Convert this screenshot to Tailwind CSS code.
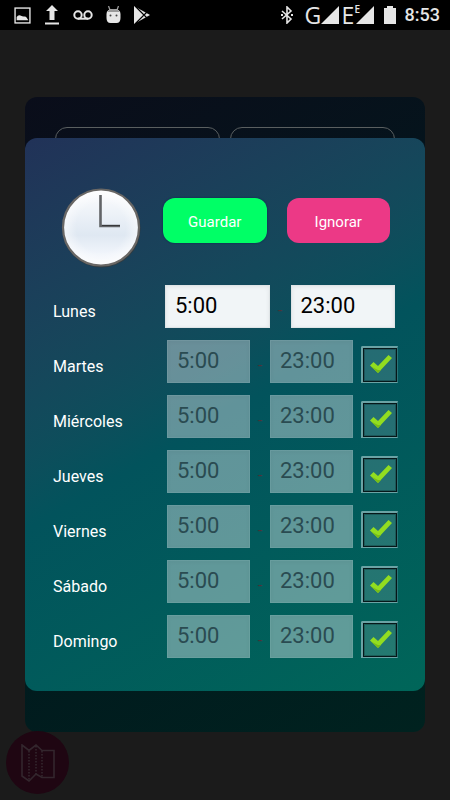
<!DOCTYPE html>
<html lang="es">
<head>
<meta charset="utf-8">
<meta name="viewport" content="width=device-width, initial-scale=1">
<title>Horario</title>
<script src="https://cdn.jsdelivr.net/npm/@tailwindcss/browser@4"></script>
</head>
<body class="flex min-h-screen flex-col bg-[#1b1b1b] font-['Roboto',sans-serif] text-white">
<header class="flex h-[30px] shrink-0 items-center justify-between bg-black pr-[10px] pl-[14px] text-[#e6e6e6]">
  <div class="flex items-center gap-[13px]">
    <svg class="size-[17px]" viewBox="0 0 16 16"><rect x="1" y="1" width="14" height="14" fill="none" stroke="currentColor" stroke-width="1.3"/><path d="M2.500 12.500V9.500q1.500-2.500 3.500-1.500t3 1q2-.500 3 1t1.500 2.500z" fill="currentColor"/></svg>
    <svg class="h-5 w-[16px]" viewBox="0 0 16 20"><path d="M8 0l6 6h-3.500v9h-5V6H2zM1 17.500h14v2H1z" fill="currentColor"/></svg>
    <svg class="h-[10px] w-5" viewBox="0 0 20 10"><path d="M5 8.700h10" stroke="currentColor" stroke-width="2"/><circle cx="5" cy="5" r="3.700" fill="none" stroke="currentColor" stroke-width="2"/><circle cx="15" cy="5" r="3.700" fill="none" stroke="currentColor" stroke-width="2"/></svg>
    <svg class="h-[18px] w-[15px]" viewBox="0 0 14 18"><path d="M2 0l1.500 4M12 0l-1.500 4" stroke="#999" stroke-width="1.300"/><path d="M0 8Q0 3 7 3t7 5v4q0 5-4 5H4q-4 0-4-5z" fill="currentColor"/><path d="M1 6Q2 3 7 3t6 3z" fill="#999"/><circle cx="4" cy="9.500" r="1" fill="#444"/><circle cx="10" cy="9.500" r="1" fill="#444"/></svg>
    <svg class="h-[18px] w-4" viewBox="0 0 16 18"><path d="M0 0L16 9 0 18z" fill="currentColor"/><path d="M1 0L13 12M1 18L13 6" stroke="#000" stroke-width="1.200"/></svg>
  </div>
  <div class="flex items-center">
    <svg class="mr-[12px] h-[18px] w-3" viewBox="0 0 12 18" fill="none" stroke="currentColor" stroke-width="1.600"><path d="M1 5l9 8-4 4V1l4 4-9 8"/><path d="M0 9h2M10 9h2" stroke-width="2"/></svg>
    <span class="w-4 font-['Open_Sans',sans-serif] text-[23px] leading-5">G</span>
    <svg class="h-[18px] w-[18px]" viewBox="0 0 18 18"><path d="M18 0v18H0z" fill="currentColor"/></svg>
    <div class="relative ml-[3px] w-[14px] font-['Open_Sans',sans-serif] text-[23px] leading-5">E<span class="absolute -top-px left-[13px] text-[10px] leading-[10px] font-semibold">E</span></div>
    <svg class="h-[18px] w-[18px]" viewBox="0 0 18 18"><path d="M18 0v18H0z" fill="currentColor"/></svg>
    <svg class="ml-[10px] h-[18px] w-3" viewBox="0 0 12 18"><path d="M0 2h3V0h6v2h3v16H0z" fill="currentColor"/></svg>
    <span class="ml-[9px] text-lg leading-5 font-medium">8:53</span>
  </div>
</header>

<main class="relative flex-1 pb-[109px]">
  <div class="absolute inset-x-[25px] top-[67px] bottom-[68px] rounded-xl bg-linear-150 from-[#0a0d1a] via-[#01171d] to-[#00221f] px-[30px] pt-[30px]">
    <div class="grid grid-cols-2 gap-[10px]">
      <div class="h-11 rounded-xl border border-[#5a5f60]"></div>
      <div class="h-11 rounded-xl border border-[#5a5f60]"></div>
    </div>
  </div>

  <form role="dialog" aria-label="Horario" class="relative mx-[25px] mt-[108px] rounded-xl bg-linear-150 from-[#213258] via-[#02535c] to-[#006659] pb-[33px] text-base">
    <div class="flex items-start pt-[50px] pr-[35px] pl-9">
      <svg class="size-20 shrink-0" viewBox="0 0 80 80" aria-hidden="true">
        <defs>
          <linearGradient id="face" x1="0" y1="0" x2="0" y2="1"><stop offset="0" stop-color="#fdfdfe"/><stop offset=".25" stop-color="#f0f4f9"/><stop offset=".6" stop-color="#dfe8f2"/><stop offset=".85" stop-color="#f1f5fb"/><stop offset="1" stop-color="#f7f9fc"/></linearGradient>
          <radialGradient id="rim" cx=".5" cy=".5" r=".5"><stop offset=".65" stop-color="#fff" stop-opacity="0"/><stop offset="1" stop-color="#fff" stop-opacity=".6"/></radialGradient>
        </defs>
        <circle cx="40.500" cy="40.500" r="39" fill="#333c40"/>
        <circle cx="40" cy="39.500" r="38" fill="url(#face)"/>
        <circle cx="40" cy="39.500" r="38" fill="url(#rim)" stroke="#696765" stroke-width="2.200"/>
        <path d="M39.500 7v31H59" fill="none" stroke="#626467" stroke-width="2.600"/>
        <path d="M41 37.500h18" stroke="#38393b" stroke-width="1"/>
      </svg>
      <div class="mt-[10px] ml-[22px] grid flex-1 grid-cols-2 gap-5 text-[15px]">
        <button type="submit" class="h-[45px] rounded-xl bg-[#00ff66] pt-[3px] shadow-[0_0_1px_1px_#102a5566]">Guardar</button>
        <button type="button" class="h-[45px] rounded-xl bg-[#ec3986] pt-[3px]">Ignorar</button>
      </div>
    </div>

    <div id="days" class="mt-[17px] flex flex-col gap-3 pl-7"></div>
  </form>

  <button type="button" aria-label="Mapa" class="absolute bottom-[6px] left-[6px] flex size-[63px] items-center justify-center rounded-full bg-[#1f0612]">
    <svg class="h-[38px] w-[34px]" viewBox="0 0 34 38" fill="none" stroke="#33262d" stroke-width="1.600"><path d="M1 1l7 5.500L15 1l6 5.500h12v27H21L15 30 8 37 1 32z"/><path d="M8 7v29M15 2v28M21 7v26" stroke-dasharray="1.500 1.500"/></svg>
  </button>
</main>

<template id="first">
  <fieldset class="flex pr-[30px]">
    <label for="d0" class="w-28 shrink-0 pt-4 leading-[22px]">Lunes</label>
    <div class="flex min-w-0 flex-1">
      <input id="d0" class="h-[43px] w-0 min-w-0 flex-1 border border-[#dfe4e6] bg-[#f1f5f7] px-[9px] pb-0.5 text-[22px] text-black shadow-[inset_0_1px_4px_#00000012]" value="5:00">
      <span class="w-[21px] pt-4 text-center text-base leading-5 text-[#4a3438]">-</span>
      <input aria-label="Lunes, hasta" class="h-[43px] w-0 min-w-0 flex-1 border border-[#dfe4e6] bg-[#f1f5f7] px-[9px] pb-0.5 text-[22px] text-black shadow-[inset_0_1px_4px_#00000012]" value="23:00">
    </div>
  </fieldset>
</template>
<template id="other">
  <fieldset class="flex pr-[27px]">
    <label class="w-[114px] shrink-0 pt-4 leading-[22px]"></label>
    <div class="flex min-w-0 flex-1">
      <input disabled data-from class="h-[43px] w-0 min-w-0 flex-1 border border-white/5 bg-[#f1f5f7]/40 px-[9px] pb-0.5 text-[22px] text-[#2a4b51] shadow-[inset_0_1px_4px_#0000000a]" value="5:00">
      <span class="w-5 pt-4 text-center text-base leading-5 text-[#4a3438]">-</span>
      <input disabled data-to class="h-[43px] w-0 min-w-0 flex-1 border border-white/5 bg-[#f1f5f7]/40 px-[9px] pb-0.5 text-[22px] text-[#2a4b51] shadow-[inset_0_1px_4px_#0000000a]" value="23:00">
      <div class="relative mt-[6px] ml-2 size-[37px] shrink-0 rounded-tl-xs border-t-2 border-r border-b border-l-2 border-t-[#6ba3a5] border-r-[#2b7377] border-b-[#6ba3a5] border-l-[#6ba3a5]">
        <input type="checkbox" checked class="peer block size-full appearance-none border border-[#061719] bg-white/14 shadow-[inset_0_0_0_1px_#06171944]">
        <svg class="pointer-events-none absolute top-1 left-[6px] hidden size-6 peer-checked:block" viewBox="0 0 24 24"><path d="M1 13.500l3.500-3.500 4.500 4L19.500 3l3.500 3L9 21z" fill="#92dd20"/><path d="M2 14.500L9 21 12 18 9 18z" fill="#78bd18"/></svg>
      </div>
    </div>
  </fieldset>
</template>
<script>
const list = document.getElementById('days');
list.append(document.getElementById('first').content.cloneNode(true));
['Martes', 'Miércoles', 'Jueves', 'Viernes', 'Sábado', 'Domingo'].forEach((day, i) => {
  const row = document.getElementById('other').content.cloneNode(true);
  const label = row.querySelector('label');
  label.textContent = day;
  label.htmlFor = 'd' + (i + 1);
  row.querySelector('[data-from]').id = 'd' + (i + 1);
  row.querySelector('[data-to]').ariaLabel = day + ', hasta';
  row.querySelector('[type=checkbox]').ariaLabel = day + ', igual que el lunes';
  list.append(row);
});
</script>
</body>
</html>
